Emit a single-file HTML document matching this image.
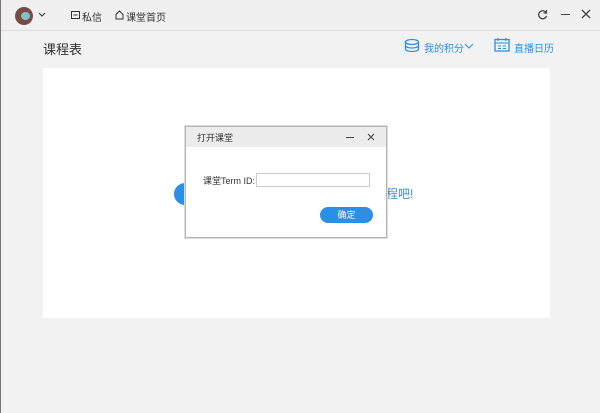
<!DOCTYPE html>
<html><head><meta charset="utf-8"><style>
body{margin:0;width:600px;height:413px;background:#f2f2f2;font-family:"Liberation Sans","Noto Sans CJK SC",sans-serif;position:relative;overflow:hidden}
.a{position:absolute}
</style></head><body>
<div class="a" style="left:0;top:0;width:600px;height:30px;background:#f0f0f0;border-bottom:1px solid #dcdcdc"></div>
<div class="a" style="left:0;top:0;width:1px;height:413px;background:#777"></div>
<div class="a" style="left:15px;top:7px;width:18px;height:18px;border-radius:50%;background:#7a4a45"></div>
<div class="a" style="left:21px;top:12px;width:9px;height:8px;border-radius:50%;background:#7cc4c8"></div>
<svg class="a" style="left:38px;top:12px" width="8" height="6"><path d="M1 1l3 3 3-3" stroke="#444" fill="none" stroke-width="1.2"/></svg>
<svg class="a" style="left:71px;top:11px" width="9" height="9"><rect x="0.5" y="0.5" width="8" height="7" fill="none" stroke="#333"/><path d="M2.5 4h4" stroke="#333"/></svg>
<div class="a" style="left:82px;top:9px;font-size:10px;color:#333">私信</div>
<svg class="a" style="left:115px;top:10px" width="9" height="10"><path d="M1 4.5L4.5 1 8 4.5V9H1z" fill="none" stroke="#333"/></svg>
<div class="a" style="left:126px;top:9px;font-size:10px;color:#333">课堂首页</div>
<svg class="a" style="left:537px;top:9px" width="11" height="11"><path d="M9 3.5A4 4 0 1 0 9.5 7" fill="none" stroke="#444" stroke-width="1.3"/><path d="M9.5 1v3h-3" fill="none" stroke="#444" stroke-width="1.2"/></svg>
<div class="a" style="left:561px;top:14px;width:9px;height:1.3px;background:#444"></div>
<svg class="a" style="left:581px;top:9px" width="10" height="10"><path d="M1 1l8 8M9 1l-8 8" stroke="#444" stroke-width="1.3"/></svg>
<div class="a" style="left:43px;top:39px;font-size:13px;color:#333">课程表</div>
<svg class="a" style="left:404px;top:38px" width="16" height="15"><ellipse cx="8" cy="4" rx="6.5" ry="2.5" fill="none" stroke="#2a8fe6" stroke-width="1.3"/><path d="M1.5 4v7c0 1.5 3 2.5 6.5 2.5s6.5-1 6.5-2.5V4M1.5 7.5c0 1.5 3 2.5 6.5 2.5s6.5-1 6.5-2.5" fill="none" stroke="#2a8fe6" stroke-width="1.3"/></svg>
<div class="a" style="left:424px;top:40px;font-size:10px;color:#2a8fe6">我的积分</div>
<svg class="a" style="left:464px;top:43px" width="10" height="6"><path d="M1 1l4 4 4-4" stroke="#2a8fe6" fill="none"/></svg>
<svg class="a" style="left:494px;top:37px" width="16" height="15"><rect x="1" y="2.5" width="14" height="11.5" fill="none" stroke="#2a8fe6" stroke-width="1.3"/><path d="M4 1v3M12 1v3M1 6h14M4 9h3M9 9h3M4 11.5h3M9 11.5h3" stroke="#2a8fe6"/></svg>
<div class="a" style="left:514px;top:40px;font-size:10px;color:#2a8fe6">直播日历</div>
<div class="a" style="left:43px;top:68px;width:507px;height:250px;background:#fff"></div>
<div class="a" style="left:174px;top:183px;width:22px;height:22px;border-radius:50%;background:#2a8fe6"></div>
<div class="a" style="left:386px;top:185px;font-size:12px;color:#3b8fd0">程吧!</div>
<div class="a" style="left:185px;top:126px;width:200px;height:110px;background:#fff;border:1px solid #b5b5b5;box-shadow:0 0 0 1px #ddd"></div>
<div class="a" style="left:186px;top:127px;width:200px;height:20px;background:#ececec"></div>
<div class="a" style="left:197px;top:131px;font-size:9px;color:#333">打开课堂</div>
<div class="a" style="left:346px;top:137px;width:8px;height:1px;background:#444"></div>
<svg class="a" style="left:367px;top:133px" width="8" height="8"><path d="M1 1l6 6M7 1l-6 6" stroke="#444" stroke-width="1.1"/></svg>
<div class="a" style="left:203px;top:174px;font-size:9px;color:#333">课堂Term ID:</div>
<div class="a" style="left:256px;top:173px;width:112px;height:12px;border:1px solid #ccc;background:#fff"></div>
<div class="a" style="left:320px;top:207px;width:53px;height:16px;border-radius:8px;background:#2a8fe6;color:#fff;font-size:9px;text-align:center;line-height:16px">确定</div>
</body></html>
